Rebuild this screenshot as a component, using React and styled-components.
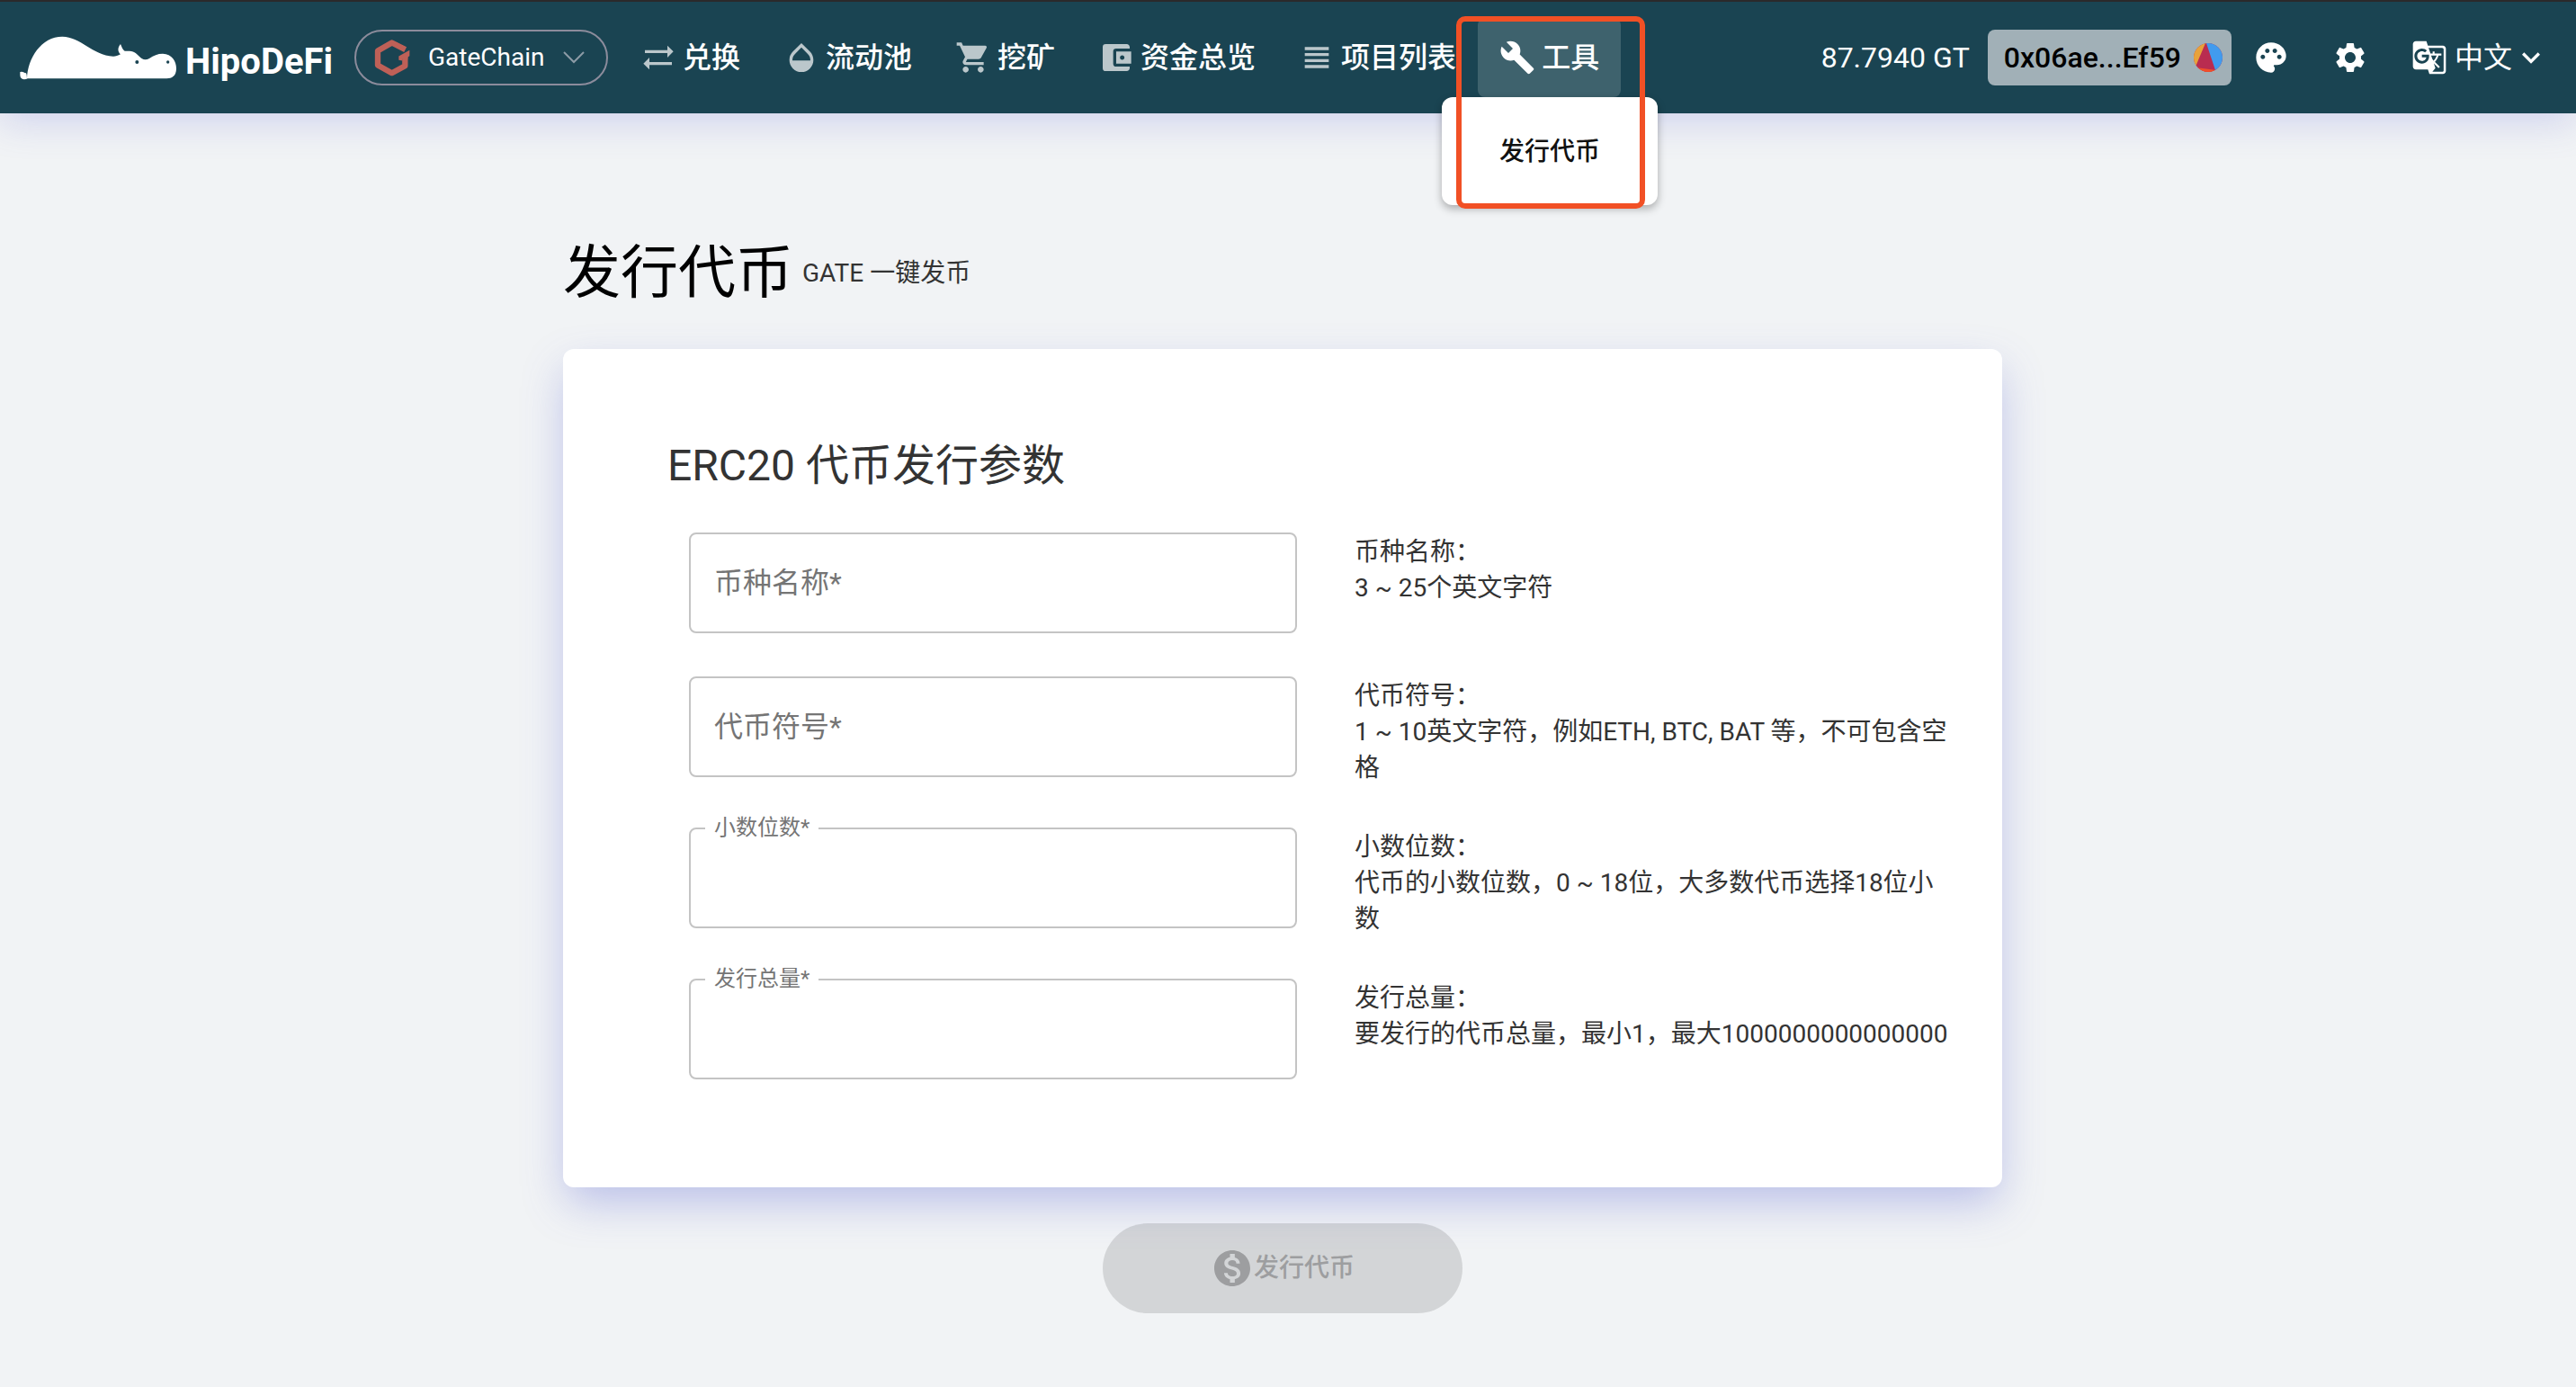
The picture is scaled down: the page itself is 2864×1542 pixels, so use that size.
import React, { useState } from 'react';
import styled, { createGlobalStyle } from 'styled-components';
import {
  MdSyncAlt,
  MdOpacity,
  MdShoppingCart,
  MdAccountBalanceWallet,
  MdViewHeadline,
  MdBuild,
  MdPalette,
  MdSettings,
  MdGTranslate,
  MdExpandMore,
  MdMonetizationOn,
} from 'react-icons/md';

const fontStack = "Roboto, 'Noto Sans CJK SC', sans-serif";
const shade = '90, 100, 212';

const GlobalStyle = createGlobalStyle`
  * { box-sizing: border-box; }
  body {
    margin: 0;
    min-height: 100vh;
    background: #f1f3f5;
    color: #333;
    font-family: ${fontStack};
    font-size: 28px;
    line-height: 40px;
  }
  button, input, select { font: inherit; color: inherit; }
  a { color: inherit; text-decoration: none; }
  svg { display: block; flex: none; }
`;

const Header = styled.header`
  position: relative;
  z-index: 2;
  display: flex;
  align-items: center;
  height: 126px;
  padding: 0 30px 0 22px;
  border-top: 2px solid #2b2a2b;
  background: #1a4452;
  color: #fff;
  box-shadow: 0 8px 40px rgba(${shade}, 0.24);
`;

const Brand = styled.a`
  display: flex;
  align-items: flex-end;
  gap: 6px;
  font-size: 40px;
  font-weight: 700;
  line-height: 40px;
`;

const ChainPicker = styled.label`
  display: flex;
  align-items: center;
  gap: 20px;
  height: 62px;
  margin-left: 24px;
  padding: 0 24px 0 20px;
  border: 2px solid #8c8c9c;
  border-radius: 31px;
`;

const BareSelect = styled.select`
  appearance: none;
  padding: 0;
  border: 0;
  background: transparent;
  outline: none;
  cursor: pointer;
  font-size: ${(p) => (p.$large ? 32 : 28)}px;
  line-height: 40px;
`;

const Nav = styled.nav`
  display: flex;
  height: 88px;
  margin-left: 12px;
`;

const NavSlot = styled.div`
  position: relative;
  display: flex;
`;

const NavLink = styled.a`
  display: flex;
  align-items: center;
  gap: 7px;
  padding: 0 24px;
  border-radius: 8px;
  background: ${(p) => (p.$active ? 'rgba(255, 255, 255, 0.16)' : 'transparent')};
  font-size: 32px;
  font-weight: 500;
  white-space: nowrap;

  svg { opacity: ${(p) => (p.$active ? 1 : 0.7)}; }
`;

const Menu = styled.div`
  position: absolute;
  top: 100%;
  left: -40px;
  display: flex;
  align-items: center;
  justify-content: center;
  width: 240px;
  height: 120px;
  padding-top: 2px;
  border-radius: 12px;
  background: #fff;
  color: #111;
  font-weight: 500;
  box-shadow: 0 4px 10px rgba(0, 0, 0, 0.3);
`;

const Highlight = styled.div`
  position: absolute;
  top: -2px;
  left: -24px;
  width: 210px;
  height: 214px;
  border: 6px solid #f15025;
  border-radius: 10px;
  pointer-events: none;
`;

const Account = styled.div`
  display: flex;
  align-items: center;
  margin-left: auto;
`;

const Balance = styled.span`
  margin-right: 20px;
  font-size: 32px;
`;

const WalletButton = styled.button`
  display: flex;
  align-items: center;
  gap: 14px;
  height: 62px;
  padding: 0 10px 0 18px;
  border: 0;
  border-radius: 8px;
  background: #a1b0b7;
  color: #000;
  font-size: 32px;
  font-weight: 500;
`;

const IconButton = styled.button`
  display: flex;
  padding: 24px;
  border: 0;
  background: transparent;
`;

const Language = styled.label`
  display: flex;
  align-items: center;
  gap: 8px;
  padding-left: 24px;
`;

const LanguageValue = styled.span`
  display: flex;
  align-items: center;
`;

const Main = styled.main`
  width: 1600px;
  max-width: 100%;
  margin: 0 auto;
  padding: 138px 0 80px;
`;

const Page = styled.div`
  padding-right: 12px;
`;

const TitleRow = styled.div`
  display: flex;
  align-items: center;
  gap: 10px;
  margin-bottom: 44px;
`;

const Title = styled.h1`
  margin: 0;
  color: #000;
  font-size: 64px;
  font-weight: 400;
  line-height: 80px;
`;

const Card = styled.section`
  padding: 98px 56px 118px 116px;
  border-radius: 12px;
  background: #fff;
  box-shadow: 0 20px 48px -4px rgba(${shade}, 0.36);
`;

const CardTitle = styled.h2`
  margin: 0 0 42px;
  font-size: 48px;
  font-weight: 400;
  line-height: 64px;
`;

const Fields = styled.div`
  display: grid;
  gap: 46px;
  padding-left: 24px;
`;

const FieldRow = styled.div`
  display: grid;
  grid-template-columns: 1fr 664px;
  gap: 64px;
`;

const FieldBox = styled.div`
  position: relative;
  height: 114px;
  padding-bottom: 2px;
`;

const FieldLabel = styled.label`
  position: absolute;
  left: ${(p) => (p.$raised ? 18 : 28)}px;
  top: ${(p) => (p.$raised ? -20 : 36)}px;
  padding: ${(p) => (p.$raised ? '0 10px' : '0')};
  background: #fff;
  color: #757575;
  font-size: ${(p) => (p.$raised ? 24 : 32)}px;
  line-height: 40px;
`;

const FieldInput = styled.input`
  width: 100%;
  height: 100%;
  padding: 0 28px;
  border: 2px solid #c4c4c4;
  border-radius: 8px;
  background: #fff;
  outline: none;
  font-size: 32px;
`;

const Hint = styled.p`
  margin: 0;
  padding-top: 2px;
`;

const SubmitButton = styled.button`
  display: flex;
  align-items: center;
  justify-content: center;
  width: 400px;
  height: 100px;
  margin: 40px auto 0;
  border: 0;
  border-radius: 50px;
  background: rgba(0, 0, 0, 0.12);
  font-weight: 500;

  &:disabled { color: #9d9ea0; }
`;

const HippoLogo = () => (
  <svg width="178" height="49" viewBox="38 46 534 147" aria-hidden="true">
    <path
      fill="#fff"
      d="M62 188C64 120 110 48 180 48C240 48 280 110 350 114C358 114 366 112 374 107C364 98 364 84 374 73C379 83 380 92 388 96C395 97 402 96 410 97C426 100 434 114 446 122C452 126 462 126 470 121C485 111 497 105 515 105C545 106 560 130 560 155C560 180 545 188 528 188H64Q60 191 52 191Q39 189 39 176V166Q48 163 56 170Q61 165 62 188Z"
    />
    <circle cx="429" cy="133" r="6" fill="#1a4452" />
    <circle cx="532" cy="133" r="5" fill="#1a4452" />
  </svg>
);

const GateLogo = () => (
  <svg width="40" height="41" viewBox="1218 60 120 122" aria-hidden="true">
    <path
      fill="none"
      stroke="#bf6057"
      strokeWidth="19"
      strokeLinejoin="round"
      d="M1322 93L1277 70L1230 97V145L1277 171L1321 147V116"
    />
    <path fill="#bf6057" d="M1336 95V114L1330 118V124H1312V130L1300 128V115Z" />
  </svg>
);

const ThinChevron = () => (
  <svg width="24" height="14" viewBox="0 0 24 14" aria-hidden="true">
    <path d="M1 1L12 12L23 1" fill="none" stroke="#8c9ba6" strokeWidth="2" />
  </svg>
);

const Identicon = () => (
  <svg width="32" height="32" viewBox="0 0 32 32" aria-hidden="true">
    <defs>
      <clipPath id="identicon-disc">
        <circle cx="16" cy="16" r="16" />
      </clipPath>
    </defs>
    <g clipPath="url(#identicon-disc)">
      <rect width="32" height="32" fill="#b92c50" />
      <path d="M0 0H13L2 26H0Z" fill="#e8a23a" />
      <path d="M14 0H32V27L24 30Z" fill="#419bee" />
      <path d="M2 27L25 30V32H2Z" fill="#f04f2a" />
    </g>
  </svg>
);

const navItems = [
  { label: '兑换', icon: MdSyncAlt },
  { label: '流动池', icon: MdOpacity },
  { label: '挖矿', icon: MdShoppingCart },
  { label: '资金总览', icon: MdAccountBalanceWallet },
  { label: '项目列表', icon: MdViewHeadline },
];

const fields = [
  { id: 'name', label: '币种名称', hint: '3 ~ 25个英文字符' },
  { id: 'symbol', label: '代币符号', hint: '1 ~ 10英文字符，例如ETH, BTC, BAT 等，不可包含空格' },
  { id: 'decimals', label: '小数位数', hint: '代币的小数位数，0 ~ 18位，大多数代币选择18位小数', raised: true },
  { id: 'supply', label: '发行总量', hint: '要发行的代币总量，最小1，最大1000000000000000', raised: true },
];

function Field({ id, label, hint, raised }) {
  const [value, setValue] = useState('');
  const [focused, setFocused] = useState(false);
  return (
    <FieldRow>
      <FieldBox>
        <FieldInput
          id={id}
          value={value}
          onChange={(e) => setValue(e.target.value)}
          onFocus={() => setFocused(true)}
          onBlur={() => setFocused(false)}
        />
        <FieldLabel htmlFor={id} $raised={raised || focused || value !== ''}>
          {label}*
        </FieldLabel>
      </FieldBox>
      <Hint>
        {label}：<br />
        {hint}
      </Hint>
    </FieldRow>
  );
}

export default function App() {
  return (
    <>
      <GlobalStyle />
      <Header>
        <Brand href="#">
          <HippoLogo />
          HipoDeFi
        </Brand>
        <ChainPicker>
          <GateLogo />
          <BareSelect aria-label="Chain">
            <option>GateChain</option>
          </BareSelect>
          <ThinChevron />
        </ChainPicker>
        <Nav>
          {navItems.map(({ label, icon: Icon }) => (
            <NavLink key={label} href="#">
              <Icon size={40} />
              {label}
            </NavLink>
          ))}
          <NavSlot>
            <NavLink href="#" $active>
              <MdBuild size={40} />
              工具
            </NavLink>
            <Menu>
              <a href="#">发行代币</a>
            </Menu>
            <Highlight />
          </NavSlot>
        </Nav>
        <Account>
          <Balance>87.7940 GT</Balance>
          <WalletButton>
            0x06ae...Ef59
            <Identicon />
          </WalletButton>
          <IconButton aria-label="Theme">
            <MdPalette size={40} />
          </IconButton>
          <IconButton aria-label="Settings">
            <MdSettings size={40} />
          </IconButton>
          <Language>
            <MdGTranslate size={40} />
            <LanguageValue>
              <BareSelect $large aria-label="Language">
                <option>中文</option>
              </BareSelect>
              <MdExpandMore size={40} />
            </LanguageValue>
          </Language>
        </Account>
      </Header>
      <Page>
        <Main>
          <TitleRow>
            <Title>发行代币</Title>
            <span>GATE 一键发币</span>
          </TitleRow>
          <Card>
            <CardTitle>ERC20 代币发行参数</CardTitle>
            <Fields>
              {fields.map((field) => (
                <Field key={field.id} {...field} />
              ))}
            </Fields>
          </Card>
          <SubmitButton disabled>
            <MdMonetizationOn size={48} />
            发行代币
          </SubmitButton>
        </Main>
      </Page>
    </>
  );
}
